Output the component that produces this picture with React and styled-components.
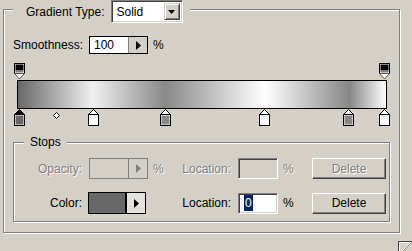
import React from "react";
import styled, { createGlobalStyle } from "styled-components";

const GlobalStyle = createGlobalStyle`
  html, body {
    margin: 0;
    padding: 0;
    background: #d4d0c8;
  }
  body {
    font-family: "Liberation Sans", Arial, sans-serif;
    font-size: 12px;
    color: #000;
  }
`;

const Root = styled.div`
  width: 412px;
  height: 251px;
  box-sizing: border-box;
  padding: 9px 0 0 3px;
  background: #d4d0c8;
  overflow: hidden;
`;

// etched group box: gray line with a white line one pixel down/right
const Frame = styled.div`
  width: 397px;
  height: 224px;
  box-sizing: border-box;
  border: 1px solid #808080;
  box-shadow: 1px 1px 0 #fff, inset 1px 1px 0 #fff;
  display: flex;
  flex-direction: column;
  align-items: flex-start;
`;

const Header = styled.div`
  display: flex;
  align-items: center;
  gap: 6px;
  margin: -10px 0 0 9px;
  padding: 0 7px 0 13px;
  background: #d4d0c8;
  height: 23px;
`;

const Sunken = styled.div`
  box-sizing: border-box;
  border: 1px solid;
  border-color: #808080 #fff #fff #808080;
  box-shadow: inset 1px 1px 0 #404040, inset -1px -1px 0 #d4d0c8;
`;

const Select = styled(Sunken)`
  width: 72px;
  height: 23px;
  background: #fff;
  display: flex;
  align-items: center;
  justify-content: space-between;
  padding: 2px;
  span {
    padding-left: 3px;
  }
`;

const Raised = styled.div`
  box-sizing: border-box;
  border: 1px solid;
  border-color: #d4d0c8 #404040 #404040 #d4d0c8;
  box-shadow: inset 1px 1px 0 #fff, inset -1px -1px 0 #808080;
  background: #d4d0c8;
  display: flex;
  align-items: center;
  justify-content: center;
`;

const DropButton = styled(Raised)`
  width: 16px;
  height: 17px;
`;

const Row = styled.div`
  display: flex;
  align-items: center;
  margin: ${(p) => p.$top}px 0 0 9px;
`;

const Label = styled.span`
  width: 76px;
`;

const Spin = styled.div`
  box-sizing: border-box;
  width: ${(p) => p.$w}px;
  height: ${(p) => p.$h}px;
  border: 1px solid ${(p) => (p.$disabled ? "#808080" : "#000")};
  display: flex;
  background: ${(p) => p.$fill};
`;

const SpinValue = styled.div`
  flex: 1;
  display: flex;
  align-items: center;
  padding-left: 4px;
  background: ${(p) => p.$fill};
`;

const SpinArrow = styled.div`
  width: 18px;
  display: flex;
  align-items: center;
  justify-content: center;
  border-left: ${(p) => p.$sep}px solid ${(p) => p.$sepColor};
  background: ${(p) => p.$bg || "#d4d0c8"};
`;

const Percent = styled.span`
  margin-left: 5px;
  color: ${(p) => (p.$disabled ? "#808080" : "#000")};
  text-shadow: ${(p) => (p.$disabled ? "1px 1px 0 #fff" : "none")};
`;

const Editor = styled.div`
  position: relative;
  width: 376px;
  height: 63px;
  margin: 9px 0 0 10px;
`;

const Bar = styled.div`
  box-sizing: border-box;
  width: 370px;
  height: 29px;
  margin: 17px 0 0 3px;
  border: 1px solid #000;
  background: linear-gradient(
    to right,
    #686868 0%,
    #f0f0f0 20.3%,
    #898989 40%,
    #ffffff 67.1%,
    #878787 90.1%,
    #ffffff 100%
  );
`;

const Marker = styled.svg`
  position: absolute;
  top: ${(p) => (p.$top ? 0 : 46)}px;
  display: block;
`;

const Diamond = styled.svg`
  position: absolute;
  top: 49px;
  display: block;
`;

const Stops = styled.div`
  box-sizing: border-box;
  width: 377px;
  height: 80px;
  margin: 16px 0 0 9px;
  border: 1px solid #808080;
  box-shadow: 1px 1px 0 #fff, inset 1px 1px 0 #fff;
  display: flex;
  flex-direction: column;
  align-items: flex-start;
`;

const Legend = styled.div`
  height: 13px;
  line-height: 13px;
  margin: -7px 0 0 10px;
  padding: 0 6px;
  background: #d4d0c8;
`;

const Grid = styled.div`
  display: grid;
  grid-template-columns: 75px 59px 35px 55px 40px 34px 74px;
  grid-template-rows: 21px 22px;
  row-gap: 13px;
  align-items: center;
  margin-top: 9px;
`;

const FieldLabel = styled.span`
  justify-self: end;
  padding-right: 7px;
  color: ${(p) => (p.$disabled ? "#808080" : "#000")};
  text-shadow: ${(p) => (p.$disabled ? "1px 1px 0 #fff" : "none")};
`;

const Swatch = styled.div`
  box-sizing: border-box;
  width: 58px;
  height: 22px;
  margin-left: -1px;
  border: 1px solid #000;
  display: flex;
`;

const LocInput = styled(Sunken)`
  width: 40px;
  height: 21px;
  background: ${(p) => (p.$disabled ? "#d4d0c8" : "#fff")};
  display: flex;
  align-items: center;
  padding-left: 5px;
`;

const Selected = styled.span`
  background: #0a246a;
  color: #fff;
  padding: 1px 1px;
  line-height: 14px;
`;

const Button = styled.div`
  box-sizing: border-box;
  width: 74px;
  height: 21px;
  border: 1px solid;
  border-color: #fff #404040 #404040 #fff;
  box-shadow: inset -1px -1px 0 #808080;
  display: flex;
  align-items: center;
  justify-content: center;
  color: ${(p) => (p.$disabled ? "#808080" : "#000")};
  text-shadow: ${(p) => (p.$disabled ? "1px 1px 0 #fff" : "none")};
`;

const Grip = styled.div`
  width: 14px;
  height: 10px;
  margin: 8px 0 0 395px;
  border-top: 1px solid #404040;
  border-left: 1px solid #404040;
  box-shadow: inset 1px 1px 0 #fff;
  svg {
    display: block;
  }
`;

const colorStops = [
  { pos: 0, fill: "#686868", selected: true },
  { pos: 20.3, fill: "#ffffff" },
  { pos: 40, fill: "#898989" },
  { pos: 67.1, fill: "#ffffff" },
  { pos: 90.1, fill: "#878787" },
  { pos: 100, fill: "#ffffff" },
];

const opacityStops = [0, 100];

const RightArrow = ({ color = "#000" }) => (
  <svg width="5" height="9" viewBox="0 0 5 9">
    <path d="M0 0 L5 4.5 L0 9 Z" fill={color} />
  </svg>
);

const DownArrow = () => (
  <svg width="7" height="4" viewBox="0 0 7 4">
    <path d="M0 0 H7 L3.5 4 Z" fill="#000" />
  </svg>
);

const ColorStop = ({ fill, selected, left }) => (
  <Marker width="11" height="17" viewBox="0 0 11 17" style={{ left }}>
    <path
      d="M5.5 0.5 L10.5 5.5 H0.5 Z"
      fill={selected ? "#000" : "#fff"}
      stroke="#000"
    />
    <rect x="0.5" y="5.5" width="10" height="11" fill="#fff" stroke="#000" />
    <rect x="1.5" y="6.5" width="8" height="9" fill={fill} />
  </Marker>
);

const OpacityStop = ({ left }) => (
  <Marker $top width="11" height="17" viewBox="0 0 11 17" style={{ left }}>
    <rect x="0.5" y="0.5" width="10" height="10" fill="#fff" stroke="#000" />
    <rect x="1.5" y="1.5" width="8" height="6" fill="#000" />
    <rect x="1.5" y="7.5" width="8" height="2" fill="#808080" />
    <path d="M0.5 10.5 H10.5 L5.5 16 Z" fill="#fff" stroke="#555" />
  </Marker>
);

const GradientEditor = () => (
  <Editor>
    {opacityStops.map((p) => (
      <OpacityStop key={p} left={Math.round(p * 3.65)} />
    ))}
    <Bar />
    {colorStops.map((s) => (
      <ColorStop key={s.pos} {...s} left={Math.round(s.pos * 3.65)} />
    ))}
    <Diamond width="7" height="7" viewBox="0 0 7 7" style={{ left: 39 }}>
      <path d="M3.5 0.5 L6.5 3.5 L3.5 6.5 L0.5 3.5 Z" fill="#fff" stroke="#000" />
    </Diamond>
  </Editor>
);

export default function App() {
  return (
    <>
      <GlobalStyle />
      <Root>
        <Frame>
          <Header>
            <span>Gradient Type:</span>
            <Select>
              <span>Solid</span>
              <DropButton>
                <DownArrow />
              </DropButton>
            </Select>
          </Header>

          <Row $top={13}>
            <Label>Smoothness:</Label>
            <Spin $w={59} $h={18} $fill="#fff">
              <SpinValue $fill="#fff">100</SpinValue>
              <SpinArrow $sep={1} $sepColor="#808080">
                <RightArrow />
              </SpinArrow>
            </Spin>
            <Percent>%</Percent>
          </Row>

          <GradientEditor />

          <Stops>
            <Legend>Stops</Legend>
            <Grid>
              <FieldLabel $disabled>Opacity:</FieldLabel>
              <Spin $w={59} $h={21} $fill="#d4d0c8" $disabled>
                <SpinValue $fill="#d4d0c8" />
                <SpinArrow $sep={1} $sepColor="#808080">
                  <RightArrow color="#808080" />
                </SpinArrow>
              </Spin>
              <Percent $disabled>%</Percent>
              <FieldLabel $disabled>Location:</FieldLabel>
              <LocInput $disabled />
              <Percent $disabled>%</Percent>
              <Button $disabled>Delete</Button>

              <FieldLabel>Color:</FieldLabel>
              <Swatch>
                <SpinValue $fill="#686868" />
                <SpinArrow $sep={2} $sepColor="#000" $bg="#e4e2dc">
                  <RightArrow />
                </SpinArrow>
              </Swatch>
              <Percent />
              <FieldLabel>Location:</FieldLabel>
              <LocInput>
                <Selected>0</Selected>
              </LocInput>
              <Percent>%</Percent>
              <Button>Delete</Button>
            </Grid>
          </Stops>
        </Frame>
        <Grip>
          <svg width="13" height="9" viewBox="0 0 13 9">
            <path d="M3 9 L12 0" stroke="#fff" strokeWidth="1" />
            <path d="M4 9 L13 0" stroke="#808080" strokeWidth="1" />
          </svg>
        </Grip>
      </Root>
    </>
  );
}
